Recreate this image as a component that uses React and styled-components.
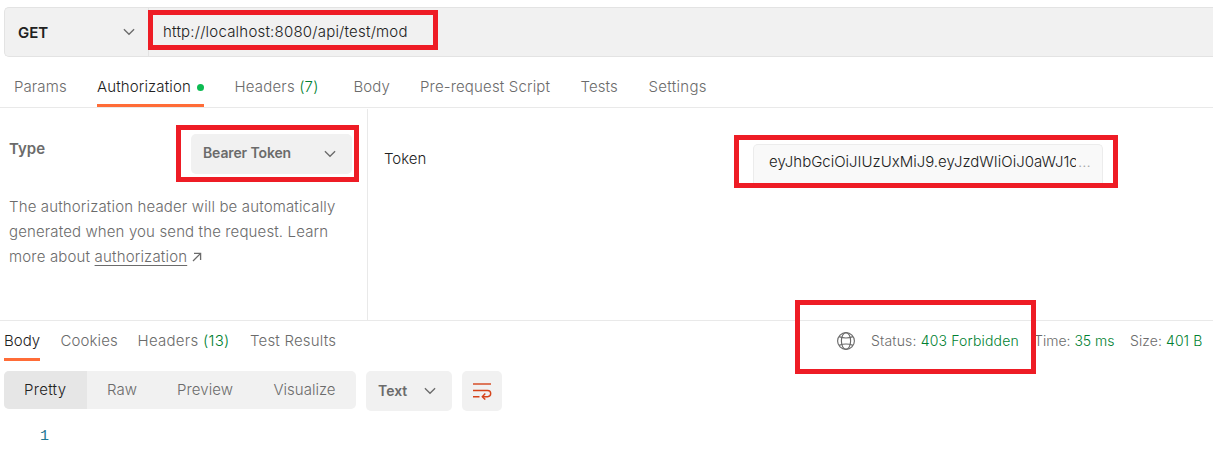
import React from "react";
import styled, { createGlobalStyle } from "styled-components";

const GlobalStyle = createGlobalStyle`
  * { box-sizing: border-box; }
  body {
    margin: 0;
    background: #fff;
    font-family: Inter, "Liberation Sans", sans-serif;
    font-size: 15px;
    font-weight: 350;
    color: #6b6b6b;
    overflow: hidden;
  }
`;

const Page = styled.div`
  position: relative;
  width: 1213px;
  height: 450px;
  padding-top: 7px;
  overflow: hidden;
`;

const Text = styled.span`
  white-space: pre;
  letter-spacing: ${(p) => p.$ls || 0}px;
`;

const RequestBar = styled.div`
  display: flex;
  height: 50px;
  margin-left: 4px;
  background: #f1f1f1;
  border: 1px solid #e3e3e3;
  border-right: 0;
  border-radius: 5px 0 0 5px;
`;

const Method = styled.div`
  display: flex;
  align-items: center;
  justify-content: space-between;
  width: 144px;
  padding: 0 13px 0 13px;
  border-right: 1px solid #e3e3e3;
  font-weight: 600;
  color: #212121;
`;

const Url = styled.div`
  display: flex;
  align-items: center;
  padding: 0 0 2px 14px;
  color: #212121;
`;

const RequestTabs = styled.nav`
  display: flex;
  height: 51px;
  padding: 11px 0 0 14px;
  border-bottom: 1px solid #e9e9e9;
`;

const TabSlot = styled.div`
  flex: none;
  width: ${(p) => p.$w}px;
`;

const Tab = styled.div`
  display: inline-flex;
  align-items: flex-start;
  height: ${(p) => p.$h}px;
  line-height: 38px;
  color: ${(p) => (p.$active ? "#212121" : "#6b6b6b")};
  border-bottom: 3px solid ${(p) => (p.$active ? "#ff6c37" : "transparent")};
`;

const Green = styled.span`
  color: #007f31;
`;

const Dot = styled.i`
  width: 7px;
  height: 7px;
  margin: 16px 0 0 6px;
  border-radius: 50%;
  background: #0cbb52;
`;

const AuthSection = styled.section`
  display: flex;
  height: 213px;
  border-bottom: 1px solid #e9e9e9;
`;

const AuthType = styled.div`
  width: 368px;
  margin-top: 1px;
  border-right: 1px solid #e9e9e9;
  padding: 25px 15px 0 9px;
`;

const TypeRow = styled.div`
  display: flex;
  justify-content: space-between;
  font-weight: 600;
  line-height: 30px;
`;

const Select = styled.div`
  display: flex;
  align-items: center;
  justify-content: space-between;
  width: ${(p) => p.$w}px;
  height: 40px;
  padding: 0 ${(p) => p.$pr}px 0 12px;
  border-radius: 5px;
  background: #f1f1f1;
  font-size: 14px;
  font-weight: 600;
  line-height: 38px;

  & > span {
    padding-bottom: ${(p) => p.$lift}px;
  }
`;

const Help = styled.p`
  margin: 20px 0 0;
  line-height: 25px;
`;

const HelpLine = styled.span`
  display: flex;
  align-items: center;
  white-space: pre;
  letter-spacing: ${(p) => p.$ls}px;
`;

const Link = styled.a`
  text-decoration: underline;
  text-underline-offset: 3px;
  margin-right: 5px;
`;

const TokenPane = styled.div`
  flex: 1;
  display: flex;
  padding: 36px 110px 0 16px;
  justify-content: space-between;
  color: #212121;
`;

const TokenLabel = styled.div`
  line-height: 30px;
`;

const TokenInput = styled.div`
  display: flex;
  width: 350px;
  height: 44px;
  padding: 0 0 0 15px;
  line-height: 33px;
  background: #f9f9f9;
  border: 1px solid #ececec;
  border-bottom: 0;
  border-radius: 5px 5px 0 0;
`;

const TokenValue = styled.div`
  width: 307px;
  overflow: hidden;
`;

const Ellipsis = styled.span`
  margin-left: 2px;
  color: #a6a6a6;
`;

const ResponseHead = styled.div`
  display: flex;
  height: 41px;
  padding: 1px 0 0 4px;
`;

const ResponseStats = styled.div`
  display: flex;
  margin-left: auto;
  font-size: 14px;
  line-height: 38px;
`;

const GlobeSlot = styled.div`
  width: 35px;
  padding-top: 9px;
  line-height: 0;
`;

const Stat = styled.div`
  width: ${(p) => p.$w}px;
  white-space: pre;
  letter-spacing: ${(p) => p.$ls || 0}px;
`;

const Toolbar = styled.div`
  display: flex;
  gap: 10px;
  padding: 9px 0 0 4px;
`;

const Segments = styled.div`
  display: flex;
  width: 352px;
  height: 38px;
  border-radius: 5px;
  overflow: hidden;
  background: #f1f1f1;
`;

const Segment = styled.div`
  width: ${(p) => p.$w}px;
  padding-left: 20px;
  line-height: 38px;
  background: ${(p) => (p.$active ? "#e6e6e6" : "transparent")};
  color: ${(p) => (p.$active ? "#212121" : "#6b6b6b")};
`;

const WrapButton = styled.div`
  display: flex;
  align-items: center;
  justify-content: center;
  width: 40px;
  height: 40px;
  border-radius: 5px;
  background: #f1f1f1;
`;

const LineNumber = styled.div`
  padding: 16px 0 0 40px;
  font: 15px/20px "Liberation Mono", monospace;
  color: #237893;
`;

const Highlight = styled.div`
  position: absolute;
  left: ${(p) => p.$x}px;
  top: ${(p) => p.$y}px;
  width: ${(p) => p.$w}px;
  height: ${(p) => p.$h}px;
  border: 5px solid #ee1c25;
`;

const Chevron = () => (
  <svg width="12" height="8" viewBox="0 0 12 8" fill="none" stroke="#6b6b6b" strokeWidth="1.3">
    <path d="M0.9 1.2 L6 6.3 L11.1 1.2" />
  </svg>
);

const Arrow = () => (
  <svg width="10" height="10" viewBox="0 0 10 10" fill="none" stroke="#6b6b6b" strokeWidth="1.3">
    <path d="M1 9 L8.4 1.6 M2 1.4 H8.6 V8" />
  </svg>
);

const Globe = () => (
  <svg width="20" height="20" viewBox="0 0 20 20" fill="none" stroke="#6b6b6b" strokeWidth="1.15">
    <circle cx="10" cy="10" r="8.4" />
    <ellipse cx="10" cy="10" rx="4.6" ry="8.4" />
    <path d="M3 5.6 Q10 8.4 17 5.6 M3 14.4 Q10 11.6 17 14.4" />
  </svg>
);

const WrapIcon = () => (
  <svg width="20" height="18" viewBox="0 0 20 18" fill="none" stroke="#d5431a" strokeWidth="1.4">
    <path d="M1 2 H19" />
    <path d="M1 8.5 H15.6 A3.1 3.1 0 0 1 15.6 14.7 H10.6" />
    <path d="M1 14.7 H7.5 M13.3 11.6 L10.3 14.7 L13.3 17.6" />
  </svg>
);

export default function App() {
  return (
    <Page>
      <GlobalStyle />
      <RequestBar>
        <Method>
          <Text>GET</Text>
          <Chevron />
        </Method>
        <Url>
          <Text $ls={0.21}>http://localhost:8080/api/test/mod</Text>
        </Url>
      </RequestBar>

      <RequestTabs>
        <TabSlot $w={83}><Tab $h={39}><Text $ls={0.1}>Params</Text></Tab></TabSlot>
        <TabSlot $w={137.5}><Tab $h={39} $active><Text $ls={0.13}>Authorization</Text><Dot /></Tab></TabSlot>
        <TabSlot $w={119}><Tab $h={39}><Text $ls={0.18}>Headers <Green>(7)</Green></Text></Tab></TabSlot>
        <TabSlot $w={66.5}><Tab $h={39}><Text $ls={0.1}>Body</Text></Tab></TabSlot>
        <TabSlot $w={160.5}><Tab $h={39}><Text $ls={0.16}>Pre-request Script</Text></Tab></TabSlot>
        <TabSlot $w={68}><Tab $h={39}><Text $ls={0.1}>Tests</Text></Tab></TabSlot>
        <TabSlot $w={60}><Tab $h={39}><Text $ls={0.3}>Settings</Text></Tab></TabSlot>
      </RequestTabs>

      <AuthSection>
        <AuthType>
          <TypeRow>
            <Text>Type</Text>
            <Select $w={161} $pr={16} $lift={2}><Text $ls={-0.12}>Bearer Token</Text><Chevron /></Select>
          </TypeRow>
          <Help>
            <HelpLine $ls={0.145}>The authorization header will be automatically</HelpLine>
            <HelpLine $ls={0.13}>generated when you send the request. Learn</HelpLine>
            <HelpLine $ls={0.17}>more about <Link>authorization</Link><Arrow /></HelpLine>
          </Help>
        </AuthType>
        <TokenPane>
          <TokenLabel><Text>Token</Text></TokenLabel>
          <TokenInput>
            <TokenValue><Text>eyJhbGciOiJIUzUxMiJ9.eyJzdWIiOiJ0aWJ1c</Text></TokenValue>
            <Ellipsis>...</Ellipsis>
          </TokenInput>
        </TokenPane>
      </AuthSection>

      <ResponseHead>
        <TabSlot $w={56.5}><Tab $h={39} $active><Text>Body</Text></Tab></TabSlot>
        <TabSlot $w={77}><Tab $h={39}><Text $ls={0.12}>Cookies</Text></Tab></TabSlot>
        <TabSlot $w={112.5}><Tab $h={39}><Text $ls={0.28}>Headers <Green>(13)</Green></Text></Tab></TabSlot>
        <TabSlot $w={90}><Tab $h={39}><Text $ls={0.18}>Test Results</Text></Tab></TabSlot>
        <ResponseStats>
          <GlobeSlot><Globe /></GlobeSlot>
          <Stat $w={163} $ls={0.17}>Status: <Green>403 Forbidden</Green></Stat>
          <Stat $w={96}>Time: <Green>35 ms</Green></Stat>
          <Stat $w={83} $ls={0.08}>Size: <Green>401 B</Green></Stat>
        </ResponseStats>
      </ResponseHead>

      <Toolbar>
        <Segments>
          <Segment $w={83} $active><Text $ls={0.3}>Pretty</Text></Segment>
          <Segment $w={70}><Text>Raw</Text></Segment>
          <Segment $w={96.5}><Text $ls={0.1}>Preview</Text></Segment>
          <Segment $w={102}><Text>Visualize</Text></Segment>
        </Segments>
        <Select $w={86} $pr={16} $lift={0}><Text>Text</Text><Chevron /></Select>
        <WrapButton><WrapIcon /></WrapButton>
      </Toolbar>
      <LineNumber>1</LineNumber>

      <Highlight $x={148} $y={10} $w={290} $h={40} />
      <Highlight $x={176} $y={125} $w={183} $h={57} />
      <Highlight $x={734} $y={135} $w={384} $h={53} />
      <Highlight $x={795} $y={300} $w={241} $h={74} />
    </Page>
  );
}
